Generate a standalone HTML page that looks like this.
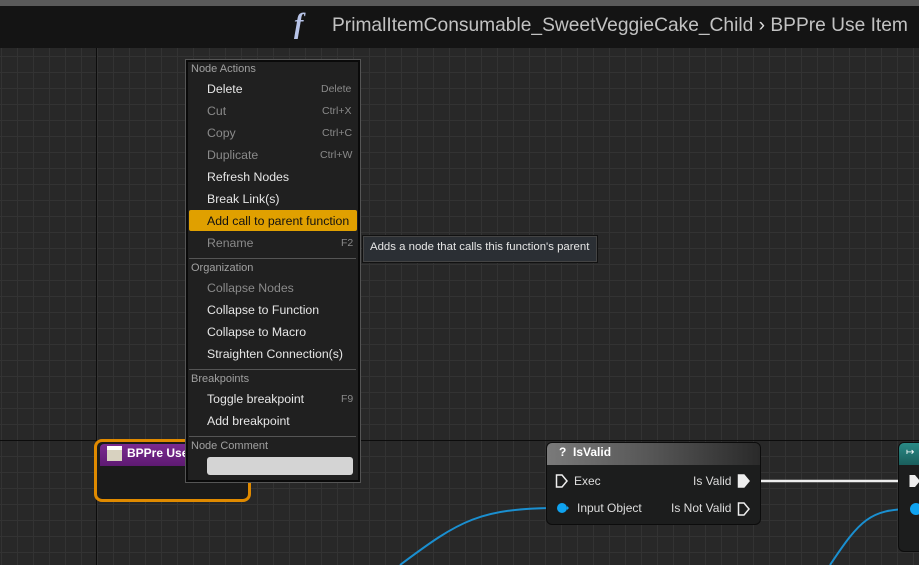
<!DOCTYPE html>
<html><head><style>
*{margin:0;padding:0;box-sizing:border-box}
body{width:919px;height:565px;overflow:hidden;position:relative;font-family:"Liberation Sans","DejaVu Sans",sans-serif;
background-color:#282828;
background-image:linear-gradient(#333 1px,transparent 1px),linear-gradient(90deg,#333 1px,transparent 1px);
background-size:16px 16px;background-position:0 8px,1px 0}
.a{position:absolute}
.mi{position:absolute;left:207px;font-size:12.3px;color:#e6e6e6;white-space:nowrap}
.dis{color:#8a8a8a}
.sc{position:absolute;font-size:10.5px;color:#8a8a8a}
.hd{position:absolute;left:191px;font-size:11px;color:#a0a0a0}
.sep{position:absolute;left:189px;width:167px;height:1px;background:#555}
.t{position:absolute;font-size:12px;color:#ddd;white-space:nowrap}
</style></head><body>
<div class="a" style="left:96px;top:0;width:1px;height:565px;background:#0c0c0c"></div>
<div class="a" style="left:0;top:440px;width:919px;height:1px;background:#0c0c0c"></div>
<div class="a" style="left:0;top:0;width:919px;height:6px;background:#5a5a5a"></div>
<div class="a" style="left:0;top:6px;width:919px;height:42px;background:#141414"></div>
<div class="a" style="left:294px;top:9px;font-family:'Liberation Serif',serif;font-style:italic;font-size:28px;color:#b8c4e8;font-weight:bold">f</div>
<div class="a" style="left:332px;top:15px;font-size:19.2px;color:#c2c2c2;white-space:nowrap">PrimalItemConsumable_SweetVeggieCake_Child <span style="color:#ddd">›</span> BPPre Use Item</div>

<svg class="a" style="left:0;top:0" width="919" height="565">
<path d="M745 481 L905 481" stroke="#eee" stroke-width="2.5"/>
<path d="M400 565 C460 520 480 508 560 508" stroke="#1a8fd0" stroke-width="2" fill="none"/>
<path d="M830 565 C860 520 870 509 912 509" stroke="#1a8fd0" stroke-width="2" fill="none"/>
</svg>

<div class="a" style="left:94px;top:439px;width:157px;height:63px;border:3px solid #e08a00;border-radius:8px;background:#1b1b1b"></div>
<div class="a" style="left:100px;top:444px;width:145px;height:22px;background:linear-gradient(#7a2a90,#5e1a72);border-radius:4px 4px 0 0"></div>
<div class="a" style="left:107px;top:446px;width:15px;height:15px;background:#d8d2c0;border-top:4px solid #fff"></div>
<div class="t" style="left:127px;top:446px;font-weight:bold;color:#fff">BPPre Use</div>

<div class="a" style="left:546px;top:442px;width:215px;height:83px;background:#1c1d1d;border-radius:6px;border:1px solid #0c0c0c"></div>
<div class="a" style="left:547px;top:443px;width:213px;height:22px;background:linear-gradient(90deg,#7a7a7a,#555 50%,#2a2a2a);border-radius:5px 5px 0 0"></div>
<div class="t" style="left:559px;top:445px;font-weight:bold;color:#fff">? &nbsp;IsValid</div>
<svg class="a" style="left:555px;top:474px" width="14" height="44"><path d="M1.5 1 H7 L12 7 L7 13 H1.5 Z" fill="none" stroke="#eee" stroke-width="1.5"/><circle cx="7" cy="34" r="5" fill="#0fa3f0"/><path d="M12 32 l2 2 -2 2z" fill="#0fa3f0"/></svg>
<div class="t" style="left:574px;top:474px">Exec</div>
<div class="t" style="left:577px;top:501px">Input Object</div>
<div class="t" style="left:693px;top:474px">Is Valid</div>
<div class="t" style="left:671px;top:501px">Is Not Valid</div>
<svg class="a" style="left:737px;top:474px" width="14" height="44"><path d="M1.5 1 H7 L12 7 L7 13 H1.5 Z" fill="#eee" stroke="#eee" stroke-width="1.5"/><path d="M1.5 29 H7 L12 35 L7 41 H1.5 Z" fill="none" stroke="#eee" stroke-width="1.5"/></svg>

<div class="a" style="left:898px;top:442px;width:30px;height:110px;background:#1c1d1d;border-radius:6px;border:1px solid #0c0c0c"></div>
<div class="a" style="left:899px;top:443px;width:30px;height:22px;background:linear-gradient(#2a8a86,#1a5e5c);border-radius:5px 0 0 0"></div>
<div class="t" style="left:906px;top:447px;font-size:10px;color:#fff">↦</div>
<svg class="a" style="left:908px;top:474px" width="14" height="44"><path d="M1.5 1 H7 L12 7 L7 13 H1.5 Z" fill="#eee"/><circle cx="8" cy="35" r="6" fill="#0fa3f0"/></svg>

<div class="a" style="left:185px;top:59px;width:176px;height:424px;background:#0a0a0a;border:1px solid #555"></div>
<div class="a" style="left:188px;top:62px;width:170px;height:418px;background:#202020"></div>
<div class="hd" style="top:63px">Node Actions</div>
<div class="mi" style="top:82px">Delete</div><div class="sc" style="left:321px;top:83px">Delete</div>
<div class="mi dis" style="top:104px">Cut</div><div class="sc" style="left:322px;top:105px">Ctrl+X</div>
<div class="mi dis" style="top:126px">Copy</div><div class="sc" style="left:322px;top:127px">Ctrl+C</div>
<div class="mi dis" style="top:148px">Duplicate</div><div class="sc" style="left:320px;top:149px">Ctrl+W</div>
<div class="mi" style="top:170px">Refresh Nodes</div>
<div class="mi" style="top:192px">Break Link(s)</div>
<div class="a" style="left:189px;top:210px;width:168px;height:21px;background:#e0a000;border-radius:2px"></div>
<div class="mi" style="top:214px;color:#111">Add call to parent function</div>
<div class="mi dis" style="top:236px">Rename</div><div class="sc" style="left:341px;top:237px">F2</div>
<div class="sep" style="top:258px"></div>
<div class="hd" style="top:262px">Organization</div>
<div class="mi dis" style="top:281px">Collapse Nodes</div>
<div class="mi" style="top:303px">Collapse to Function</div>
<div class="mi" style="top:325px">Collapse to Macro</div>
<div class="mi" style="top:347px">Straighten Connection(s)</div>
<div class="sep" style="top:369px"></div>
<div class="hd" style="top:373px">Breakpoints</div>
<div class="mi" style="top:392px">Toggle breakpoint</div><div class="sc" style="left:341px;top:393px">F9</div>
<div class="mi" style="top:414px">Add breakpoint</div>
<div class="sep" style="top:436px"></div>
<div class="hd" style="top:440px">Node Comment</div>
<div class="a" style="left:207px;top:457px;width:146px;height:18px;background:#d4d4d4;border-radius:3px"></div>

<div class="a" style="left:362px;top:235px;width:236px;height:28px;background:#2b2f34;border:1px solid #111;outline:1px solid #444;outline-offset:-2px"></div>
<div class="t" style="left:370px;top:241px;font-size:11.4px;color:#e6e6e6">Adds a node that calls this function's parent</div>
</body></html>
